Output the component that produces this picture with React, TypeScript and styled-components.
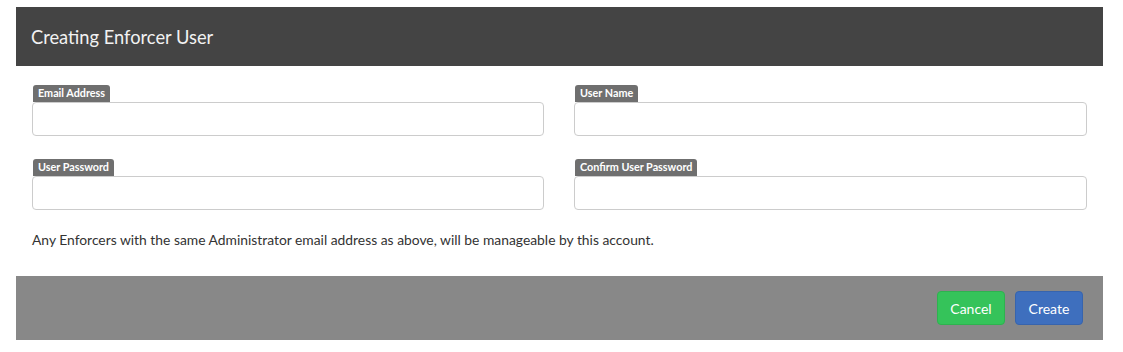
import styled, { createGlobalStyle } from "styled-components";

const GlobalStyle = createGlobalStyle`
  body {
    margin: 0;
    background: #ffffff;
    font-family: Lato, "Open Sans", "Liberation Sans", sans-serif;
  }
`;

const Page = styled.div`
  padding: 7px 0 0 16px;
`;

const Modal = styled.div`
  width: 1087px;
  background: #ffffff;
`;

const Header = styled.div`
  height: 59px;
  background: #444444;
  display: flex;
  align-items: center;
  padding: 0 15px;
`;

const Title = styled.h4`
  margin: 0;
  font-size: 18.3px;
  font-weight: 400;
  color: #f2f2f2;
`;

const Body = styled.div`
  padding: 19px 16px 0 16px;
  height: 210px;
  box-sizing: border-box;
`;

const Grid = styled.div`
  display: grid;
  grid-template-columns: 512px 513px;
  column-gap: 30px;
  row-gap: 23px;
`;

const Field = styled.div`
  display: flex;
  flex-direction: column;
  align-items: flex-start;
`;

const Badge = styled.label`
  background: #6f6f6f;
  color: #ffffff;
  font-size: 10.8px;
  font-weight: 700;
  line-height: 16px;
  height: 17px;
  padding: 0 5px;
  border-radius: 3px 3px 0 0;
  margin-left: 1px;
`;

const Input = styled.input`
  width: 100%;
  height: 34px;
  box-sizing: border-box;
  border: 1px solid #cccccc;
  border-radius: 4px;
  background: #ffffff;
  font-family: inherit;
  font-size: 13px;
  padding: 6px 10px;
  outline: none;
`;

const Note = styled.p`
  margin: 20px 0 0 0;
  font-size: 13.85px;
  line-height: 20px;
  color: #333333;
`;

const Footer = styled.div`
  height: 64px;
  background: #888888;
  display: flex;
  justify-content: flex-end;
  align-items: flex-start;
  gap: 10px;
  padding: 15px 20px 0 0;
  box-sizing: border-box;
`;

const Button = styled.button<{ $tone: "green" | "blue" }>`
  width: 68px;
  height: 34px;
  border-radius: 4px;
  font-family: inherit;
  font-size: 14px;
  color: #ffffff;
  cursor: pointer;
  background: ${({ $tone }) => ($tone === "green" ? "#35c35a" : "#3e6fbe")};
  border: 1px solid ${({ $tone }) => ($tone === "green" ? "#2eb24f" : "#3764ad")};
`;

const fields = [
  { label: "Email Address", type: "email" },
  { label: "User Name", type: "text" },
  { label: "User Password", type: "password" },
  { label: "Confirm User Password", type: "password" },
];

export default function App() {
  return (
    <>
      <GlobalStyle />
      <Page>
        <Modal>
          <Header>
            <Title>Creating Enforcer User</Title>
          </Header>
          <Body>
            <Grid>
              {fields.map((f) => (
                <Field key={f.label}>
                  <Badge>{f.label}</Badge>
                  <Input type={f.type} />
                </Field>
              ))}
            </Grid>
            <Note>
              Any Enforcers with the same Administrator email address as above, will be manageable by this account.
            </Note>
          </Body>
          <Footer>
            <Button $tone="green">Cancel</Button>
            <Button $tone="blue">Create</Button>
          </Footer>
        </Modal>
      </Page>
    </>
  );
}
